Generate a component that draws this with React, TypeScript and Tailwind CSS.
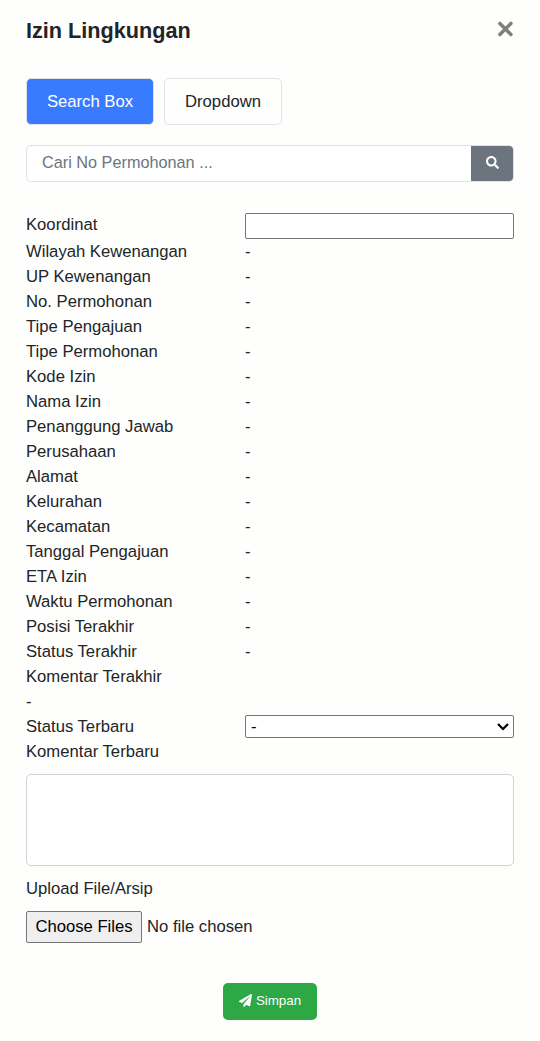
import { FaPaperPlane, FaSearch } from "react-icons/fa";

const fields = [
  "Wilayah Kewenangan",
  "UP Kewenangan",
  "No. Permohonan",
  "Tipe Pengajuan",
  "Tipe Permohonan",
  "Kode Izin",
  "Nama Izin",
  "Penanggung Jawab",
  "Perusahaan",
  "Alamat",
  "Kelurahan",
  "Kecamatan",
  "Tanggal Pengajuan",
  "ETA Izin",
  "Waktu Permohonan",
  "Posisi Terakhir",
  "Status Terakhir",
];

export default function App() {
  return (
    <main className="h-[1041px] w-[540px] overflow-hidden bg-[#fefefc] px-[26px] font-['Liberation_Sans',Arial,sans-serif] text-[16.67px] leading-[25px] text-[#212529]">
      <header className="flex h-[78px] items-start justify-between pt-[18px]">
        <h1 className="text-[21.67px] font-bold leading-[26px]">Izin Lingkungan</h1>
        <button aria-label="Tutup" className="-mr-px pt-px text-[#7f7f7e]">
          <svg viewBox="0 0 20 20" className="size-5" fill="none" stroke="currentColor" strokeWidth="3.5" strokeLinecap="round">
            <path d="M4.9 4.4 15.9 15.4M15.9 4.4 4.9 15.4" />
          </svg>
        </button>
      </header>

      <div className="flex gap-[10px]">
        <button className="h-[47px] w-32 rounded-[5px] border border-[#dee2e6] bg-[#387bff] text-white">Search Box</button>
        <button className="h-[47px] w-[118px] rounded-[5px] border border-[#dee2e6]">Dropdown</button>
      </div>

      <div className="mt-5 flex h-[37px] overflow-hidden rounded-[5px] border border-[#dee2e6] bg-white">
        <input
          className="min-w-0 flex-1 px-[15px] pb-0.5 text-[16.25px] outline-none placeholder:text-[#6c757d]"
          placeholder="Cari No Permohonan ..."
        />
        <button aria-label="Cari" className="flex w-[42px] items-center justify-center bg-[#6c757d] pb-0.5 text-white">
          <FaSearch className="size-[13px]" />
        </button>
      </div>

      <section className="mt-[30px] grid grid-cols-[219px_1fr]">
        <label htmlFor="koordinat" className="h-[27px]">Koordinat</label>
        <input id="koordinat" className="mt-px h-[26px] rounded-[2px] border border-[#767676] bg-white px-1" />
        {fields.map((name) => (
          <div key={name} className="contents">
            <span>{name}</span>
            <span>-</span>
          </div>
        ))}
        <span className="col-span-2">Komentar Terakhir</span>
        <span className="col-span-2">-</span>
        <label htmlFor="status">Status Terbaru</label>
        <div className="pt-px">
          <div id="status" role="combobox" className="flex h-[23px] items-center justify-between rounded-[2px] border border-[#767676] bg-white pr-[3px] pl-[5px] text-black">
            <span>-</span>
            <svg viewBox="0 0 14 10" className="h-[10px] w-[14px]" fill="none" stroke="black" strokeWidth="2.2">
              <path d="M2 2l5 5 5-5" />
            </svg>
          </div>
        </div>
        <label htmlFor="komentar" className="col-span-2">Komentar Terbaru</label>
      </section>

      <textarea id="komentar" className="mt-[10px] block h-[92px] w-full resize-none rounded-[5px] border border-[#ced4da] bg-white" />
      <div className="mt-[10px]">Upload File/Arsip</div>
      <div className="mt-[10px] flex items-center gap-[5px]">
        <button className="h-8 w-[116px] rounded-[2px] border border-[#767676] bg-[#efefef] pb-0.5 text-black">Choose Files</button>
        <span className="pb-0.5">No file chosen</span>
      </div>

      <div className="mt-10 flex justify-center">
        <button className="flex h-[37px] w-[94px] items-center justify-center gap-1 rounded-[5px] bg-[#2ea745] pb-0.5 text-[13.33px] text-white">
          <FaPaperPlane className="size-[13px]" />
          <span className="pb-px">Simpan</span>
        </button>
      </div>
    </main>
  );
}
